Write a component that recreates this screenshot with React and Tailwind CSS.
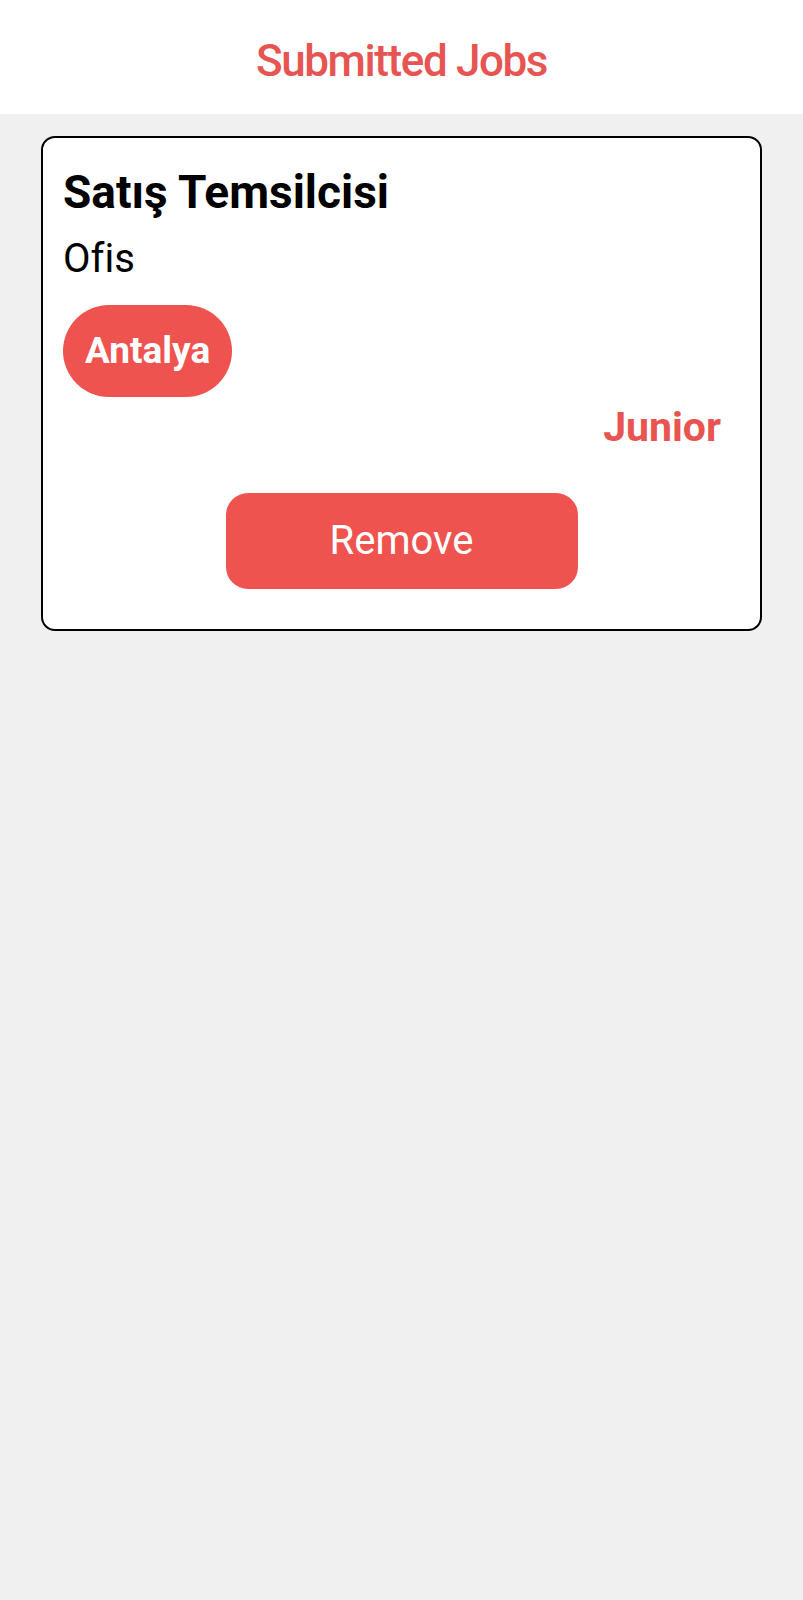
import React from 'react';

const jobs = [
    { title: 'Satış Temsilcisi', type: 'Ofis', city: 'Antalya', level: 'Junior' },
];

function JobCard({ job }) {
    return (
        <div className="mx-[41px] mt-[22px] rounded-[14px] border-2 border-black bg-white px-[20px] pt-[27px] pb-[40px]">
            <h2 className="text-[46px] leading-[54px] font-bold text-black">{job.title}</h2>
            <p className="mt-[16px] text-[40px] leading-[48px] text-black [font-variant-ligatures:none]">{job.type}</p>
            <div className="mt-[22px] flex">
                <span className="flex h-[92px] items-center rounded-full bg-[#ef5350] px-[22px] text-[37px] leading-[42px] font-bold text-white">
                    {job.city}
                </span>
            </div>
            <p className="mt-[6px] mr-[19px] text-right text-[41px] leading-[48px] font-bold text-[#e95451]">{job.level}</p>
            <div className="mt-[42px] flex justify-center">
                <button className="h-[96px] w-[352px] rounded-[22px] bg-[#ef5350] text-[40px] leading-[46px] text-white">
                    Remove
                </button>
            </div>
        </div>
    );
}

export default function App() {
    return (
        <div className="min-h-screen bg-[#f0f0f0] font-['Roboto',sans-serif]">
            <header className="flex h-[114px] items-center justify-center bg-white pt-[8px]">
                <h1 className="text-[44px] leading-[52px] font-medium tracking-[-1.4px] text-[#e75552]">Submitted Jobs</h1>
            </header>
            {jobs.map((job) => (
                <JobCard key={job.title} job={job} />
            ))}
        </div>
    );
}
